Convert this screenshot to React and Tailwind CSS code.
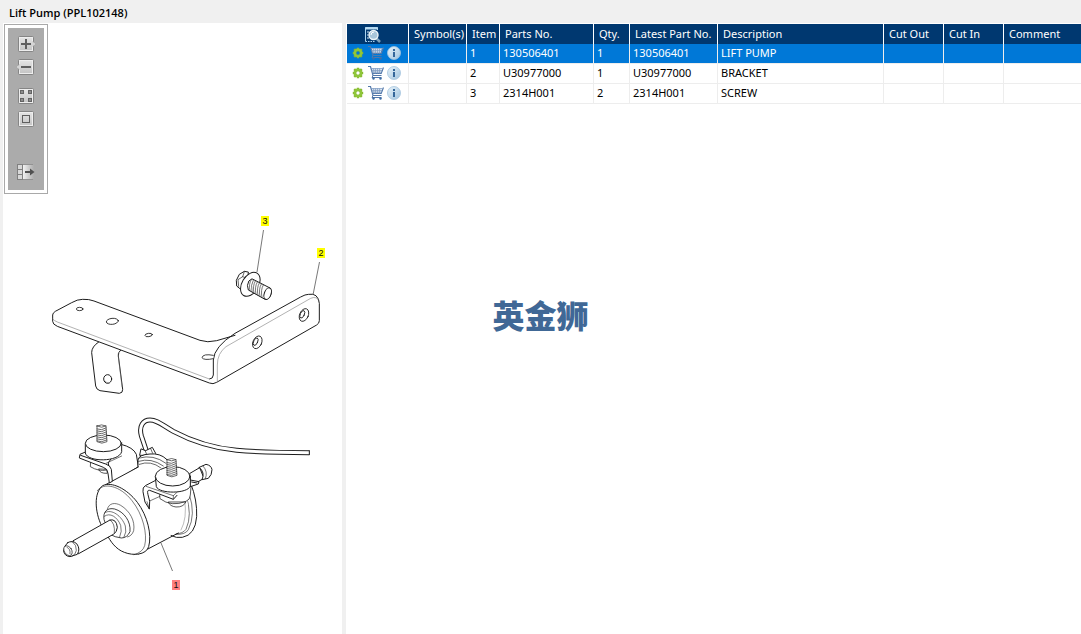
import React from "react";

const COLUMNS = [
  { label: "Symbol(s)", width: "w-[58px]" },
  { label: "Item", width: "w-[33px]" },
  { label: "Parts No.", width: "w-[94px]" },
  { label: "Qty.", width: "w-[36px]" },
  { label: "Latest Part No.", width: "w-[88px]" },
  { label: "Description", width: "w-[166px]" },
  { label: "Cut Out", width: "w-[60px]" },
  { label: "Cut In", width: "w-[60px]" },
  { label: "Comment", width: "w-auto" },
];

const PARTS = [
  ["", "1", "130506401", "1", "130506401", "LIFT PUMP", "", "", ""],
  ["", "2", "U30977000", "1", "U30977000", "BRACKET", "", "", ""],
  ["", "3", "2314H001", "2", "2314H001", "SCREW", "", "", ""],
];

function ToolButton({ label, className = "", children }) {
  return (
    <button type="button" aria-label={label} className={`block h-4 w-5 ${className}`}>
      <svg viewBox="0 0 20 16" className="block h-4 w-5" fill="none">
        {children}
      </svg>
    </button>
  );
}

function Plate() {
  return (
    <>
      <rect x="2.5" y="0.5" width="15" height="15" rx="1" fill="url(#plate)" stroke="#858585" />
      <rect x="3.5" y="1.5" width="13" height="13" stroke="#eeeeee" />
    </>
  );
}

function Toolbar() {
  return (
    <div className="ml-px mt-px w-11 border border-[#a9a9a9] bg-white p-[3px]">
      <div className="flex flex-col items-center bg-[#ababab] pb-[10px] pt-2">
        <svg className="absolute h-0 w-0" aria-hidden="true">
          <defs>
            <linearGradient id="plate" x1="0" y1="0" x2="0" y2="1">
              <stop offset="0" stopColor="#e6e6e6" />
              <stop offset="1" stopColor="#c2c2c2" />
            </linearGradient>
            <linearGradient id="fade" x1="0" y1="0" x2="1" y2="0">
              <stop offset="0" stopColor="#f2f2f2" />
              <stop offset="1" stopColor="#ababab" />
            </linearGradient>
          </defs>
        </svg>
        <ToolButton label="Zoom in">
          <Plate />
          <path d="M17 5.500L19.500 8L17 10.500z" fill="#ececec" stroke="#8c8c8c" strokeWidth="0.500" />
          <path d="M5 8h10M10 3v10" stroke="#5f5f5f" strokeWidth="2" />
        </ToolButton>
        <ToolButton label="Zoom out" className="mt-[7px]">
          <Plate />
          <path d="M3 5.500L0.500 8L3 10.500z" fill="#ececec" stroke="#8c8c8c" strokeWidth="0.500" />
          <path d="M5 8h10" stroke="#5f5f5f" strokeWidth="2" />
        </ToolButton>
        <ToolButton label="Show all" className="mt-[13px]">
          <Plate />
          <g fill="#8c8c8c" stroke="#636363">
            <rect x="4.5" y="2.5" width="3" height="3" />
            <rect x="12.5" y="2.5" width="3" height="3" />
            <rect x="4.5" y="10.5" width="3" height="3" />
            <rect x="12.5" y="10.5" width="3" height="3" />
          </g>
        </ToolButton>
        <ToolButton label="Fit to window" className="mt-[7px]">
          <Plate />
          <rect x="6.5" y="4.5" width="7" height="7" stroke="#5f5f5f" />
        </ToolButton>
        <ToolButton label="Toggle list" className="mt-[37px]">
          <rect x="7" y="1" width="11" height="14" fill="url(#fade)" />
          <path d="M6 0.5h11M6 15.5h11" stroke="#929292" />
          <g fill="#d8d8d8" stroke="#808080">
            <rect x="1.5" y="0.5" width="5" height="5" />
            <rect x="1.5" y="5.5" width="5" height="5" />
            <rect x="1.5" y="10.5" width="5" height="5" />
          </g>
          <path d="M9 8h7" stroke="#505050" strokeWidth="2" />
          <path d="M14 4.500l4.500 3.500L14 11.500z" fill="#505050" />
        </ToolButton>
      </div>
    </div>
  );
}

function Bracket() {
  return (
    <g transform="translate(40 280) scale(0.33333)">
      <path d="M176 186Q155 200 155 218L167 318Q169 329 180 332L238 340Q249 339 248 328L235 228Q234 217 242 210" />
      <path d="M234 222L246 320" stroke="#777" strokeWidth="1.5" />
      <ellipse cx="203" cy="297" rx="12" ry="13" />
      <path d="M192 300Q198 310 208 309" strokeWidth="2" stroke="#777" />
      <path d="M585 166L530 182Q502 189 480 181L162 63Q147 57 128 58Q112 58 95 68L46 94Q38 99 38 105V124Q38 133 52 139L508 309Q519 314 530 307L830 135Q838 130 838 122V70Q834 38 806 43Q796 43 782 51L585 160Q522 200 520 240V285Q519 297 509 297" />
      <path d="M38 117Q42 122 52 126L508 297M532 305V255Q532 220 558 200L812 55Q830 47 838 63" stroke="#777" strokeWidth="1.7" fill="none" />
      <g strokeWidth="2.5">
        <ellipse cx="119" cy="87" rx="10" ry="5" />
        <ellipse cx="217" cy="124" rx="18" ry="9" transform="rotate(-6 217 124)" />
        <ellipse cx="326" cy="165" rx="11" ry="5" transform="rotate(-8 326 165)" />
        <path d="M520 226Q489 220 486 233Q492 242 520 236" />
        <ellipse cx="652" cy="187" rx="13" ry="20" transform="rotate(24 652 187)" />
        <ellipse cx="647" cy="185" rx="6" ry="12" transform="rotate(24 647 185)" />
        <ellipse cx="792" cy="105" rx="13" ry="20" transform="rotate(24 792 105)" />
        <ellipse cx="787" cy="103" rx="6" ry="12" transform="rotate(24 787 103)" />
      </g>
    </g>
  );
}

function Screw() {
  return (
    <g transform="translate(200 200) scale(0.33333)">
      <path d="M144 216L133 214L118 223L109 241L110 258L121 267L140 255Z" />
      <path d="M133 215L128 230L144 236M128 230L114 239L116 259" strokeWidth="2" fill="none" />
      <ellipse cx="151" cy="253" rx="25" ry="39" transform="rotate(31 151 253)" />
      <path d="M157 237L210 264Q217 271 213 282Q207 300 195 298L145 270Q139 256 146 244Z" />
      <ellipse cx="203" cy="281" rx="10" ry="18" transform="rotate(20 203 281)" />
      <path d="M154 239Q145 252 150 272M160 240Q151 255 156 275M166 243Q157 258 162 279M172 246Q163 261 168 282M178 249Q169 264 174 286M184 252Q175 267 180 289M190 255Q181 270 186 292" strokeWidth="1.8" fill="none" />
    </g>
  );
}

function Stud({ x, y }) {
  return (
    <g transform={`translate(${x} ${y})`} strokeWidth="2">
      <path d="M-14 -24V23Q0 32 16 23L13 -24Q0 -31 -14 -24Z" />
      <path d="M-14 -24Q0 -16 13 -24M-14 -15Q0 -9 13 -18M-14 -9Q0 -3 13 -12M-14 -3Q0 3 14 -6M-14 3Q0 9 14 0M-14 9Q0 15 15 6M-14 15Q0 21 15 12M-14 21Q0 27 15 18" />
    </g>
  );
}

function Pump() {
  const pipe = "M291 158L274 107C266 77 280 60 300 60C322 60 335 74 370 94C430 126 500 145 560 151C640 158 700 158 778 158";
  return (
    <g transform="translate(50 400) scale(0.33333)">
      <path d={pipe} fill="none" strokeWidth="15" strokeLinecap="butt" />
      <path d={pipe} fill="none" stroke="#fff" strokeWidth="9" strokeLinecap="butt" />
      <path d="M778 152V164" />

      <path d="M213 133Q250 142 259 163L265 200L185 250L175 190Z" />
      <path d="M274 147L287 152L307 142L317 160L312 166L270 166Z" />
      <path d="M285 151L290 163M302 146L308 160" strokeWidth="2" />

      <path d="M264 198V180Q266 164 300 162Q330 159 350 178L422 250Q442 300 440 350Q436 405 397 412Q379 415 364 407Z" />
      <path d="M268 174Q310 162 348 190M266 184Q303 172 340 198M268 193Q302 180 333 204" strokeWidth="2" fill="none" />
      <path d="M418 283Q438 344 415 389Q406 405 376 403M408 285Q428 345 408 388Q398 401 380 401" strokeWidth="1.8" fill="none" />
      <path d="M160 256L265 201L335 205L410 292Q420 350 404 380L265 462Z" stroke="none" />
      <path d="M165 255L265 201M265 462L385 399" />
      <path d="M404 300Q412 355 393 390" stroke="#777" strokeWidth="1.5" fill="none" />

      <path d="M155 378C134 335 131 278 158 257C184 244 230 265 262 307C293 348 306 405 296 440C288 465 250 468 223 457C198 448 181 425 170 402Z" />
      <path d="M142 272C160 246 210 256 246 302C279 343 293 403 284 437Q278 457 252 464" strokeWidth="1.7" fill="none" />

      <path d="M172 328C176 308 196 307 212 316C240 333 256 363 251 392Q246 408 232 411" strokeWidth="1.8" fill="none" />
      <path d="M162 358C158 335 172 322 194 327C222 335 243 364 240 395Q231 414 214 414Q195 412 180 403Z" strokeWidth="2.5" />
      <path d="M165 338C184 325 216 348 226 378Q231 397 222 411M163 349C180 336 202 351 212 376Q217 394 209 411" fill="none" strokeWidth="1.8" />

      <path d="M70 422L180 360Q199 356 202 382Q201 397 190 403L86 461Z" />
      <path d="M180 360Q196 369 193 400" fill="none" strokeWidth="1.8" />
      <path d="M53 428Q67 420 80 431Q92 447 82 463L60 470Q43 468 41 453Q41 438 53 428Z" />
      <path d="M66 424Q81 436 79 451Q78 463 66 469" fill="none" strokeWidth="1.8" />
      <ellipse cx="54" cy="452" rx="11" ry="16" transform="rotate(-33 54 452)" strokeWidth="2" />
      <path d="M51 442Q62 446 60 461" fill="none" strokeWidth="1.8" />

      <path d="M122 182L121 200Q146 215 170 210L166 194ZM146 208Q149 221 172 220L171 209Z" strokeWidth="2.2" />
      <path d="M111 154L90 163L88 174L160 202Q173 206 174 220L178 249L187 244L184 208Q181 196 167 192L92 166" />
      <path d="M168 190L215 168" strokeWidth="1.8" />
      <path d="M106 132V159C112 187 207 187 215 155V128" />
      <ellipse cx="160" cy="130" rx="54" ry="25" />
      <Stud x={155} y={102} />

      <path d="M420 220L449 203L462 235L425 256Z" />
      <path d="M448 202L468 193Q484 196 486 209Q486 225 475 235L456 239Q466 218 448 202Z" />
      <path d="M459 198Q475 215 466 236" fill="none" strokeWidth="1.8" />
      <path d="M421 240L447 245L445 252L421 260Z" />
      <path d="M425 246L441 249" />
      <path d="M328 278L330 296Q364 322 408 304Q420 300 421 285L423 260ZM355 307Q360 319 378 321Q400 322 407 307Z" strokeWidth="2.2" />
      <path d="M317 241L286 257Q277 262 279 275L285 306L298 327L300 288L290 270L370 298L381 286L374 278L300 258" stroke="none" />
      <path d="M317 241L286 257Q277 262 279 275L285 306L298 327L299 304L294 284Q290 269 299 271L370 298L381 286" fill="none" />
      <path d="M288 259L370 287V298M370 287L382 276M299 303L330 289M298 327L291 305" strokeWidth="1.8" fill="none" />
      <path d="M316 230L319 260C327 282 413 282 421 258V229" />
      <ellipse cx="368" cy="229" rx="52" ry="29" />
      <Stud x={365} y={203} />
    </g>
  );
}

function Callout({ number, x, y, fill }) {
  return (
    <g>
      <rect x={x} y={y} width="8" height="10" fill={fill} />
      <text x={x + 4} y={y + 8} textAnchor="middle" className="font-['Liberation_Sans',sans-serif] text-[9px]" fill="#111">
        {number}
      </text>
    </g>
  );
}

function Diagram() {
  return (
    <svg viewBox="3 194 339 406" className="block h-auto w-full" role="img" aria-label="Lift pump exploded view">
      <g fill="#fff" stroke="#1c1c1c" strokeWidth="3" strokeLinejoin="round" strokeLinecap="round">
        <Bracket />
        <Screw />
        <Pump />
      </g>
      <path d="M263.500 230L257 272M319.500 262L313 295M161 543L172.500 571" stroke="#555" strokeWidth="0.8" />
      <Callout number="3" x={261} y={216} fill="#ffff00" />
      <Callout number="2" x={317} y={248} fill="#ffff00" />
      <Callout number="1" x={172} y={580} fill="#ff8080" />
    </svg>
  );
}

function SearchListIcon() {
  return (
    <svg viewBox="0 0 16 16" className="h-4 w-4" fill="none" aria-hidden="true">
      <path d="M0.500 14.500V0.500H12.500V3" stroke="#a9d2ee" />
      <path d="M0 1.500h13" stroke="#b9dcf2" strokeWidth="2" />
      <path d="M0.500 14.500h9" stroke="#a9d2ee" strokeDasharray="1.500 1" />
      <path d="M2 5h2M2 8h1.500M2 11h2" stroke="#d8eaf5" />
      <path d="M11.500 11.500l3.500 3.500" stroke="#7fa3bd" strokeWidth="2.500" />
      <circle cx="8.500" cy="8" r="4.500" fill="#a8c6da" stroke="#edf5f9" strokeWidth="1.400" />
      <path d="M6 8a3 3 0 0 1 3-3" stroke="#fff" />
    </svg>
  );
}

function GearIcon() {
  return (
    <svg viewBox="0 0 12 12" className="h-3 w-3" aria-hidden="true">
      <g stroke="#86b82f" strokeWidth="2.400">
        <path d="M6 0.800v10.400M0.800 6h10.400M2.200 2.200l7.600 7.600M9.800 2.200l-7.600 7.600" />
      </g>
      <circle cx="6" cy="6" r="3.300" fill="none" stroke="#8fc63a" strokeWidth="2.200" />
      <circle cx="6" cy="6" r="1.700" className="fill-white group-aria-selected:fill-[#0078d7]" />
    </svg>
  );
}

function CartIcon() {
  return (
    <svg viewBox="0 0 16 16" className="h-4 w-4" fill="none" aria-hidden="true">
      <path d="M3 3h11l-1.500 6H4.500z" fill="#d3dfed" />
      <path d="M0 1.500h2.500L5 10.500h8.500M15.500 2.500L13.200 8.500H4.700" stroke="#5379ab" strokeWidth="1.200" />
      <path d="M3 3.500h12M5.500 3.500l.5 5M7.500 3.500v5M9.500 3.500v5M11.500 3.500v5M3.500 5.500h10.500M4 7.200h9.500" stroke="#7f9cc2" strokeWidth="0.700" />
      <path d="M5 10.500l-1 2h9.500" stroke="#5379ab" />
      <circle cx="5.500" cy="13.500" r="1.200" fill="#416ea5" />
      <circle cx="12.500" cy="13.500" r="1.200" fill="#416ea5" />
    </svg>
  );
}

function InfoIcon() {
  return (
    <svg viewBox="0 0 14 14" className="h-[14px] w-[14px]" aria-hidden="true">
      <defs>
        <linearGradient id="glass" x1="0" y1="0" x2="1" y2="1">
          <stop offset="0" stopColor="#eaf4fa" />
          <stop offset="1" stopColor="#9fc3df" />
        </linearGradient>
      </defs>
      <circle cx="7" cy="7" r="6.500" fill="url(#glass)" stroke="#a5c4dd" strokeWidth="0.800" />
      <path d="M6 3h2v2H6zM6 6h2v5H6z" fill="#34669a" />
    </svg>
  );
}

function PartsTable() {
  return (
    <table className="w-full table-fixed border-separate border-spacing-0 text-left">
      <thead>
        <tr className="h-5 bg-[#003870] text-white">
          <th className="w-[62px] border-r border-white p-0">
            <button type="button" aria-label="Search parts" className="ml-[18px] mt-px block">
              <SearchListIcon />
            </button>
          </th>
          {COLUMNS.map((column) => (
            <th
              key={column.label}
              className={`${column.width} whitespace-nowrap border-r border-white p-0 pl-[5px] font-normal last:border-r-0`}
            >
              {column.label}
            </th>
          ))}
        </tr>
      </thead>
      <tbody>
        {PARTS.map((part, index) => (
          <tr
            key={part[1]}
            aria-selected={index === 0}
            className="group h-5 bg-white text-black aria-selected:bg-[#0078d7] aria-selected:text-white"
          >
            <td className="border-b border-r border-[#ededed] p-0 pb-0.5">
              <div className="flex h-[17px] items-center pl-[5px]">
                <button type="button" aria-label="Options">
                  <GearIcon />
                </button>
                <button type="button" aria-label="Add to cart" className="ml-1">
                  <CartIcon />
                </button>
                <button type="button" aria-label="Information" className="ml-[3px]">
                  <InfoIcon />
                </button>
              </div>
            </td>
            {part.map((value, cell) => (
              <td
                key={COLUMNS[cell].label}
                className="whitespace-nowrap border-b border-r border-[#ededed] p-0 pb-0.5 pl-[3px] last:border-r-0"
              >
                {value}
              </td>
            ))}
          </tr>
        ))}
      </tbody>
    </table>
  );
}

export default function App() {
  return (
    <div className="relative flex min-h-screen flex-col bg-[#f0f0f0] font-['Noto_Sans','Open_Sans',sans-serif] text-[11px] leading-4 text-black">
      <header className="flex h-[23px] items-center pl-[9px] pt-[3px]">
        <h1 className="font-['Open_Sans',sans-serif] font-semibold">Lift Pump (PPL102148)</h1>
      </header>
      <main className="flex grow gap-1 pl-[3px]">
        <section className="w-[339px] shrink-0 bg-white">
          <Toolbar />
          <Diagram />
        </section>
        <section className="min-w-0 grow bg-white pl-px pt-px">
          <PartsTable />
        </section>
      </main>
      <div className="pointer-events-none absolute inset-0 flex items-center justify-center pb-1.5 font-['Noto_Sans_CJK_SC',sans-serif] text-[32px] font-black leading-8 text-[#406896]">
        英金狮
      </div>
    </div>
  );
}
